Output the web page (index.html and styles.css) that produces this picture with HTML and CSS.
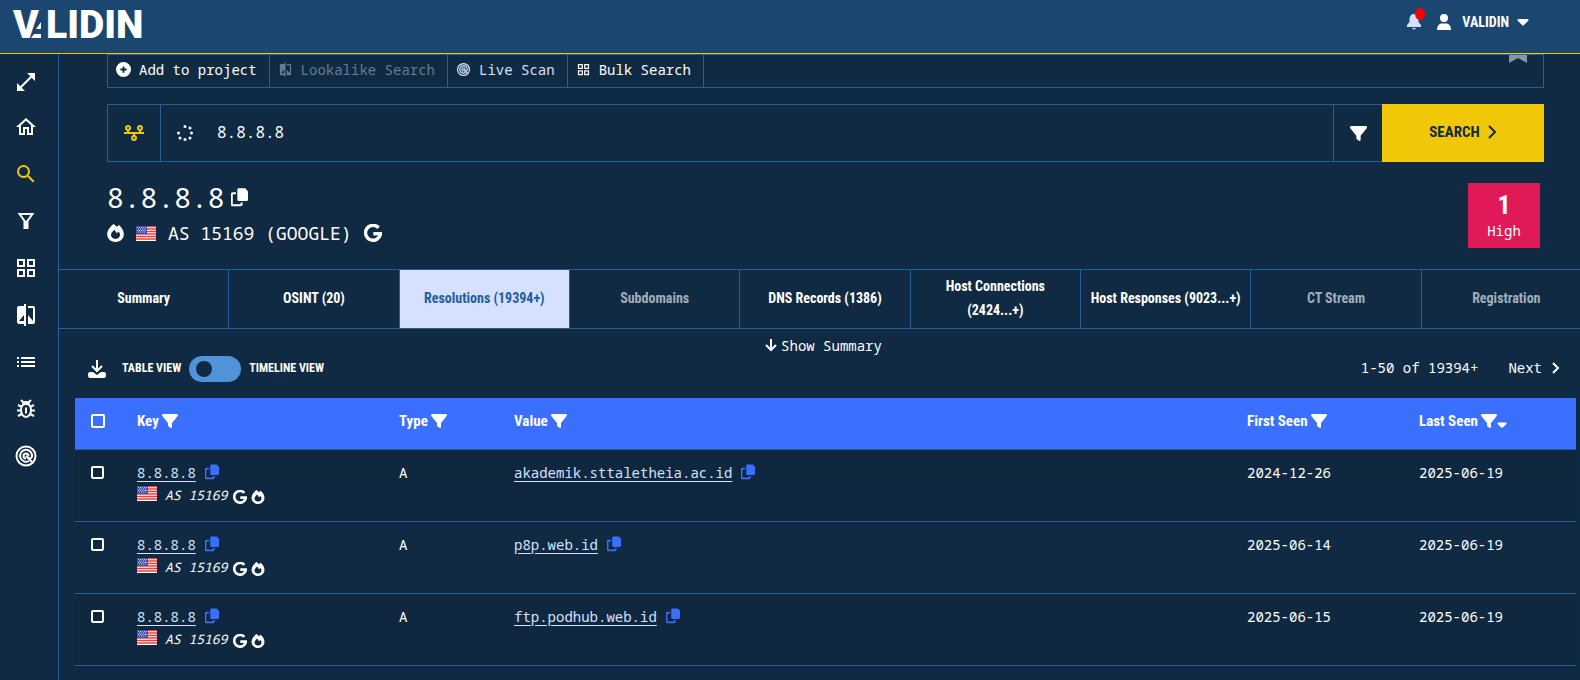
FILE: index.html
```html
<!DOCTYPE html>
<html lang="en">
<head>
    <meta charset="UTF-8">
    <meta name="viewport" content="width=device-width, initial-scale=1.0">
    <title>Validin - 8.8.8.8</title>
    <link rel="stylesheet" href="styles.css">
</head>
<body>
    <!-- Icon definitions -->
    <svg class="sprite" aria-hidden="true">
        <symbol id="expand" viewBox="0 0 24 24"><path d="M21 11V3h-8l3.29 3.29-10 10L3 13v8h8l-3.29-3.29 10-10z"/></symbol>
        <symbol id="home" viewBox="0 0 24 24"><path d="M12 5.69l5 4.5V18h-2v-6H9v6H7v-7.81l5-4.5M12 3L2 12h3v8h6v-6h2v6h6v-8h3L12 3z"/></symbol>
        <symbol id="search" viewBox="0 0 24 24"><path d="M15.5 14h-.79l-.28-.27A6.47 6.47 0 0 0 16 9.5 6.5 6.5 0 1 0 9.5 16c1.61 0 3.09-.59 4.23-1.57l.27.28v.79l5 4.99L20.49 19l-4.99-5zm-6 0C7.01 14 5 11.99 5 9.5S7.01 5 9.5 5 14 7.01 14 9.5 11.99 14 9.5 14z"/></symbol>
        <symbol id="funnel" viewBox="0 0 24 24"><path d="M5.500 5h13L13 12.500V19h-2v-6.500z" fill="none" stroke="currentColor" stroke-width="2"/><path d="M9.500 12h5v8h-5z"/></symbol>
        <symbol id="grid" viewBox="0 0 24 24"><path d="M3 3v8h8V3H3zm6 6H5V5h4v4zm-6 4v8h8v-8H3zm6 6H5v-4h4v4zm4-16v8h8V3h-8zm6 6h-4V5h4v4zm-6 4v8h8v-8h-8zm6 6h-4v-4h4v4z"/></symbol>
        <symbol id="compare" viewBox="0 0 24 24"><path d="M10 3H5c-1.1 0-2 .9-2 2v14c0 1.1.9 2 2 2h5v2h2V1h-2v2zm0 15H5l5-6v6zm9-15h-5v2h5v13l-5-6v9h5c1.1 0 2-.9 2-2V5c0-1.1-.9-2-2-2z"/></symbol>
        <symbol id="list" viewBox="0 0 24 24"><path d="M3 13h2v-2H3v2zm0 4h2v-2H3v2zm0-8h2V7H3v2zm4 4h14v-2H7v2zm0 4h14v-2H7v2zM7 7v2h14V7H7z"/></symbol>
        <symbol id="bug" viewBox="0 0 24 24"><path d="M12 7c3 0 5 2.500 5 6s-2 7-5 7-5-3.500-5-7 2-6 5-6z" fill="none" stroke="currentColor" stroke-width="2"/><path d="M8 8c0-2.500 1.500-4 4-4s4 1.500 4 4z"/><path d="M7 3l3 3M17 3l-3 3M4 8l4 2M20 8l-4 2M3 13.500h4M17 13.500h4M4 19l4-2M20 19l-4-2M12 10.500v6" fill="none" stroke="currentColor" stroke-width="2"/></symbol>
        <symbol id="target" viewBox="0 0 24 24"><g fill="none" stroke="currentColor" stroke-width="2"><circle cx="12" cy="12" r="9.500"/><path d="M15 17a6 6 0 1 1 3-4.500c-.5 2-2 2.500-3 1.500l-3-2M12 12l6 6" /><path d="M12 14.500a2.500 2.500 0 1 1 2.500-2.500"/></g></symbol>
        <symbol id="plus" viewBox="0 0 24 24"><path fill-rule="evenodd" d="M12 0a12 12 0 1 0 0 24 12 12 0 0 0 0-24zm-1.500 7h3v3.500H17v3h-3.500V17h-3v-3.500H7v-3h3.500z"/></symbol>
        <symbol id="filter" viewBox="0 0 512 512"><path d="M3.900 54.900C10.500 40.900 24.500 32 40 32h432c15.500 0 29.500 8.900 36.100 22.900s4.600 30.500-5.200 42.500L320 320.900V448c0 12.100-6.800 23.200-17.700 28.600s-23.800 4.300-33.500-3l-64-48c-8.100-6-12.800-15.500-12.800-25.600v-79.100L9 97.300C-.7 85.400-2.800 68.800 3.900 54.900z"/></symbol>
        <symbol id="copy" viewBox="0 0 24 26"><path d="M11 0h9l4 4v12a2 2 0 0 1-2 2H11a2 2 0 0 1-2-2V2a2 2 0 0 1 2-2z"/><path d="M7 7H3a2 2 0 0 0-2 2v13a2 2 0 0 0 2 2h10a2 2 0 0 0 2-2v-2" fill="none" stroke="currentColor" stroke-width="3"/></symbol>
        <symbol id="flame" viewBox="0 0 24 26"><path fill-rule="evenodd" d="M9 0c2 1 3.500 2.500 5 4.500C15 3 15.500 2.500 17 1.500 21 5 24 10 24 14.500 24 21 19 26 12 26S0 21 0 14.500C0 9 5 3.500 9 0zM8 11c-1.500 1.500-2.500 3-2.500 5 0 3.500 3 5.500 6.500 5.500s6.500-2 6.500-5.500c0-2-1-3.500-2-5L14 13.500 10 8c0 1-1 2-2 3z"/></symbol>
        <symbol id="google" viewBox="0 0 24 24"><path d="M19.500 5A10 10 0 1 0 22 13H12.500" fill="none" stroke="currentColor" stroke-width="4.500"/></symbol>
        <symbol id="flag" viewBox="0 0 20 15"><path fill="#fff" d="M0 0h20v15H0z"/><path d="M0 .5h20M0 3h20M0 5.500h20M0 8h20M0 10.500h20M0 13h20" stroke="#e8403c" stroke-width="1.300"/><path fill="#3f4fae" d="M0 0h11v8H0z"/><path d="M1 1.500h9M2 3h8M1 4.500h9M2 6h8" stroke="#c5cbee" stroke-dasharray="1 1"/></symbol>
        <symbol id="down" viewBox="0 0 12 14"><path d="M6 1v11M1 7l5 5 5-5" fill="none" stroke="currentColor" stroke-width="2"/></symbol>
        <symbol id="chevron" viewBox="0 0 10 16"><path d="M2 2l6 6-6 6" fill="none" stroke="currentColor" stroke-width="2"/></symbol>
        <symbol id="next" viewBox="0 0 8 12"><path d="M1 1l5 5-5 5" fill="none" stroke="currentColor" stroke-width="2"/></symbol>
        <symbol id="caret" viewBox="0 0 12 8"><path d="M1 1h10q1 1 0 2L7 7q-1 1-2 0L1 3Q0 2 1 1z"/></symbol>
    </svg>

    <header class="header">
        <a class="logo" href="#" aria-label="Validin">
            <svg width="136" height="52" viewBox="0 0 136 52">
                <text x="0" y="38">V</text>
                <path d="M18 38l3-4h7v4zM23 29l5-7v7z"/>
                <text x="33" y="38">LIDIN</text>
            </svg>
        </a>
        <div class="account">
            <button class="bell" aria-label="Notifications">
                <svg width="14" height="16" viewBox="0 0 14 16"><path d="M7 0c-3 0-4.500 2-4.500 5v3L0 11v2h14v-2l-2.500-3V5C11.500 2 10 0 7 0zM5 14h4q-2 3-4 0z"/></svg>
                <span class="dot"></span>
            </button>
            <button class="user">
                <svg width="14" height="16" viewBox="0 0 14 16"><circle cx="7" cy="4" r="4"/><path d="M0 16c0-4 2-6.500 5-6.500h4c3 0 5 2.500 5 6.500z"/></svg>
                <span>VALIDIN</span>
                <svg width="12" height="8"><use href="#caret"/></svg>
            </button>
        </div>
    </header>

    <div class="layout">
        <nav class="sidebar">
            <a href="#" aria-label="Expand"><svg><use href="#expand"/></svg></a>
            <a href="#" aria-label="Home"><svg><use href="#home"/></svg></a>
            <a href="#" aria-label="Search" class="current"><svg><use href="#search"/></svg></a>
            <a href="#" aria-label="Filter"><svg><use href="#funnel"/></svg></a>
            <a href="#" aria-label="Bulk search"><svg><use href="#grid"/></svg></a>
            <a href="#" aria-label="Lookalikes"><svg><use href="#compare"/></svg></a>
            <a href="#" aria-label="Lists"><svg><use href="#list"/></svg></a>
            <a href="#" aria-label="Threats"><svg><use href="#bug"/></svg></a>
            <a href="#" aria-label="Live scan"><svg><use href="#target"/></svg></a>
        </nav>

        <main class="content">
            <div class="top">
                <div class="toolbar">
                    <button><svg><use href="#plus"/></svg>Add to project</button>
                    <button class="dim" disabled><svg><use href="#compare"/></svg>Lookalike Search</button>
                    <button class="scan"><svg><use href="#target"/></svg>Live Scan</button>
                    <button><svg><use href="#grid"/></svg>Bulk Search</button>
                    <svg class="bookmark" width="18" height="8" viewBox="0 0 18 8"><path d="M0 0h18v8L9 3 0 8z"/></svg>
                </div>

                <form class="search-bar">
                    <button type="button" class="graph" aria-label="Graph">
                        <svg width="20" height="16" viewBox="0 0 20 16"><g fill="none" stroke="currentColor" stroke-width="2"><circle cx="4" cy="3" r="2"/><circle cx="16" cy="3" r="2"/><circle cx="10" cy="13" r="2"/><path d="M0 8h20M4 5v3M16 5v3M10 8v3"/></g></svg>
                    </button>
                    <svg class="spinner" width="16" height="16" viewBox="0 0 16 16"><circle cx="8" cy="1.500" r="1.500"/><circle cx="13" cy="3" r="1.500"/><circle cx="14.500" cy="8" r="1.500"/><circle cx="13" cy="13" r="1.500"/><circle cx="8" cy="14.500" r="1.500"/><circle cx="3" cy="13" r="1.500"/><circle cx="1.500" cy="8" r="1.500"/></svg>
                    <input type="text" value="8.8.8.8" aria-label="Search query">
                    <button type="button" class="filter" aria-label="Filters"><svg width="17" height="17"><use href="#filter"/></svg></button>
                    <button type="button" class="submit">SEARCH <svg width="10" height="16"><use href="#chevron"/></svg></button>
                </form>

                <div class="subject">
                    <div>
                        <h1>8.8.8.8 <svg width="17" height="19"><use href="#copy"/></svg></h1>
                        <p class="asn">
                            <svg width="17" height="18"><use href="#flame"/></svg>
                            <svg width="20" height="15"><use href="#flag"/></svg>
                            <span>AS 15169 (GOOGLE)</span>
                            <svg width="18" height="18"><use href="#google"/></svg>
                        </p>
                    </div>
                    <div class="score"><strong>1</strong>High</div>
                </div>
            </div>

            <nav class="tabs">
                <button>Summary</button>
                <button>OSINT (20)</button>
                <button class="active">Resolutions (19394+)</button>
                <button disabled>Subdomains</button>
                <button>DNS Records (1386)</button>
                <button>Host Connections (2424...+)</button>
                <button>Host Responses (9023...+)</button>
                <button disabled>CT Stream</button>
                <button disabled>Registration</button>
            </nav>

            <button class="show-summary"><svg width="12" height="14"><use href="#down"/></svg>Show Summary</button>

            <div class="table-bar">
                <button class="download" aria-label="Download">
                    <svg width="18" height="18" viewBox="0 0 18 18"><path d="M9 0v11M4 6l5 5 5-5" fill="none" stroke="currentColor" stroke-width="2"/><path d="M2 12h3l4 3 4-3h3q2 0 2 3t-2 3H2q-2 0-2-3t2-3z"/></svg>
                </button>
                <label class="switch">
                    <span>TABLE VIEW</span>
                    <input type="checkbox">
                    <span>TIMELINE VIEW</span>
                </label>
                <div class="pager">
                    <span>1-50 of 19394+</span>
                    <a href="#">Next <svg width="8" height="12"><use href="#next"/></svg></a>
                </div>
            </div>

            <table class="results">
                <thead>
                    <tr>
                        <th class="col-check"><input type="checkbox" aria-label="Select all"></th>
                        <th class="col-key">Key <svg><use href="#filter"/></svg></th>
                        <th class="col-type">Type <svg><use href="#filter"/></svg></th>
                        <th>Value <svg><use href="#filter"/></svg></th>
                        <th class="col-first">First Seen <svg><use href="#filter"/></svg></th>
                        <th class="col-last">Last Seen <svg><use href="#filter"/></svg><svg class="sort"><use href="#caret"/></svg></th>
                    </tr>
                </thead>
                <tbody>
                    <tr>
                        <td><input type="checkbox" aria-label="Select row"></td>
                        <td>
                            <a href="#">8.8.8.8</a><svg class="copy"><use href="#copy"/></svg>
                            <div class="origin"><svg class="flag"><use href="#flag"/></svg><em>AS 15169</em><svg><use href="#google"/></svg><svg><use href="#flame"/></svg></div>
                        </td>
                        <td>A</td>
                        <td><a href="#">akademik.sttaletheia.ac.id</a><svg class="copy"><use href="#copy"/></svg></td>
                        <td>2024-12-26</td>
                        <td>2025-06-19</td>
                    </tr>
                    <tr>
                        <td><input type="checkbox" aria-label="Select row"></td>
                        <td>
                            <a href="#">8.8.8.8</a><svg class="copy"><use href="#copy"/></svg>
                            <div class="origin"><svg class="flag"><use href="#flag"/></svg><em>AS 15169</em><svg><use href="#google"/></svg><svg><use href="#flame"/></svg></div>
                        </td>
                        <td>A</td>
                        <td><a href="#">p8p.web.id</a><svg class="copy"><use href="#copy"/></svg></td>
                        <td>2025-06-14</td>
                        <td>2025-06-19</td>
                    </tr>
                    <tr>
                        <td><input type="checkbox" aria-label="Select row"></td>
                        <td>
                            <a href="#">8.8.8.8</a><svg class="copy"><use href="#copy"/></svg>
                            <div class="origin"><svg class="flag"><use href="#flag"/></svg><em>AS 15169</em><svg><use href="#google"/></svg><svg><use href="#flame"/></svg></div>
                        </td>
                        <td>A</td>
                        <td><a href="#">ftp.podhub.web.id</a><svg class="copy"><use href="#copy"/></svg></td>
                        <td>2025-06-15</td>
                        <td>2025-06-19</td>
                    </tr>
                </tbody>
            </table>
        </main>
    </div>
</body>
</html>
```

FILE: styles.css
```css
* {
    box-sizing: border-box;
}

body {
    margin: 0;
    min-height: 100vh;
    display: flex;
    flex-direction: column;
    background-color: #102a43;
    color: #fff;
    font-family: "Noto Sans Mono", "DejaVu Sans Mono", monospace;
    font-size: 14px;
    overflow-x: hidden;
}

svg {
    fill: currentColor;
    flex: none;
}

.sprite {
    display: none;
}

button {
    background: none;
    border: none;
    padding: 0;
    margin: 0;
    color: inherit;
    font: inherit;
    cursor: pointer;
}

a {
    color: inherit;
}

/* Header */
.header {
    display: flex;
    justify-content: space-between;
    height: 54px;
    padding: 0 51px 0 13px;
    background-color: #1b466f;
    border-bottom: 1px solid #f0c808;
}

.logo svg {
    display: block;
    overflow: visible;
}

.logo text {
    font-family: Roboto, sans-serif;
    font-weight: 900;
    font-size: 39px;
}

.account {
    display: flex;
    gap: 16px;
    height: 44px;
    align-items: center;
}

.bell {
    position: relative;
    height: 16px;
    color: #d6e0ff;
}

.bell svg {
    display: block;
}

.dot {
    position: absolute;
    top: -6px;
    left: 8px;
    width: 10px;
    height: 12px;
    border-radius: 50%;
    background-color: #f00;
}

.user {
    display: flex;
    align-items: center;
    gap: 8px;
}

.user span {
    padding-left: 3px;
}

.user,
.submit,
.tabs button,
.switch,
.results th,
.score strong {
    font-family: "Liberation Sans Narrow", "Roboto Condensed", Roboto, sans-serif;
    font-weight: bold;
}

/* Sidebar */
.layout {
    display: flex;
    flex: 1;
}

.sidebar {
    flex: 0 0 59px;
    display: flex;
    flex-direction: column;
    gap: 23px;
    padding: 16px 0 0 14px;
    border-right: 1px solid #235f9b;
}

.sidebar a,
.sidebar svg {
    display: block;
    width: 24px;
    height: 24px;
}

.sidebar a:first-child {
    margin-bottom: -2px;
}

.sidebar .current {
    color: #f0c808;
}

.content {
    flex: 1;
    min-width: 0;
}

.top {
    padding: 0 36px 0 48px;
}

.toolbar {
    display: flex;
    height: 34px;
    border: 1px solid #235f9b;
}

.toolbar button {
    display: flex;
    align-items: center;
    gap: 8px;
    padding: 0 12px 3px 8px;
    border-right: 1px solid #235f9b;
}

.toolbar button svg {
    width: 15px;
    height: 15px;
}

.toolbar .dim {
    color: #647b95;
}

.toolbar .scan {
    color: #d6e0ff;
}

.bookmark {
    margin: 0 16px 0 auto;
    color: #8795a1;
}

/* Search bar */
.search-bar {
    display: flex;
    align-items: center;
    height: 58px;
    margin-top: 16px;
    border: 1px solid #235f9b;
}

.search-bar button {
    display: flex;
    align-items: center;
    justify-content: center;
    align-self: stretch;
}

.graph {
    width: 53px;
    border-right: 1px solid #235f9b;
    color: #f0c808;
}

.spinner {
    margin: 0 24px 0 16px;
}

.search-bar input {
    flex: 1;
    min-width: 0;
    background: none;
    border: none;
    outline: none;
    padding: 0 0 2px;
    color: #fff;
    font: inherit;
    font-size: 16px;
}

.search-bar .filter {
    width: 50px;
    border-left: 1px solid #235f9b;
}

.search-bar .submit {
    width: 162px;
    gap: 7px;
    margin: -1px;
    padding-bottom: 3px;
    background-color: #f0c808;
    color: #102a43;
    font-size: 15px;
}

/* Subject */
.subject {
    display: flex;
    justify-content: space-between;
    padding: 21px 4px 21px 0;
}

h1 {
    display: flex;
    align-items: center;
    gap: 6px;
    margin: 0;
    font-size: 28px;
    font-weight: normal;
    line-height: 28px;
}

.asn {
    display: flex;
    align-items: center;
    gap: 12px;
    margin: 9px 0 0;
    font-size: 18px;
    line-height: 26px;
}

.score {
    width: 72px;
    height: 65px;
    padding-top: 6px;
    background-color: #e01a59;
    text-align: center;
    line-height: 20px;
}

.score strong {
    display: block;
    font-size: 26px;
    line-height: 32px;
}

/* Tabs */
.tabs {
    display: grid;
    grid-template-columns: repeat(9, 1fr);
    margin-right: -12px;
}

.tabs button {
    height: 60px;
    padding: 0 8px 3px;
    border: 1px solid #235f9b;
    border-left: none;
    font-size: 14px;
    line-height: 24px;
}

.tabs button:disabled {
    color: #a2aeb9;
}

.tabs .active {
    background-color: #d6e0ff;
    color: #235f9b;
}

.show-summary {
    display: flex;
    align-items: center;
    gap: 4px;
    height: 20px;
    margin: 6px auto 0;
    padding-left: 8px;
}

.table-bar {
    display: flex;
    align-items: center;
    height: 26px;
    margin: 1px 0 16px;
    padding: 0 20px 0 29px;
}

.download {
    height: 18px;
    margin-right: 16px;
}

.switch {
    display: flex;
    align-items: center;
    gap: 8px;
    font-size: 12px;
}

.switch span,
.pager {
    padding-bottom: 3px;
}

.switch input {
    appearance: none;
    width: 52px;
    height: 26px;
    margin: 0;
    padding: 5px 7px;
    border-radius: 13px;
    background-color: #4f94d8;
}

.switch input::before {
    content: "";
    display: block;
    width: 16px;
    height: 16px;
    border-radius: 50%;
    background-color: #102a43;
}

.pager {
    display: flex;
    gap: 30px;
    margin-left: auto;
}

.pager a {
    display: flex;
    align-items: center;
    gap: 10px;
    text-decoration: none;
}

/* Results table */
.results {
    width: calc(100% - 20px);
    margin-left: 16px;
    table-layout: fixed;
    border-collapse: collapse;
}

.results th,
.results td {
    padding: 12px 8px 0;
    border-bottom: 1px solid #235f9b;
    text-align: left;
    vertical-align: top;
    line-height: 22px;
}

.results th {
    height: 51px;
    background-color: #3b6fff;
    font-size: 15px;
}

.results td {
    height: 72px;
}

.results tbody tr:nth-child(odd) {
    background-color: #10283f;
}

.col-check {
    width: 54px;
}

.col-key {
    width: 262px;
}

.col-type {
    width: 115px;
}

.col-first {
    width: 172px;
}

.col-last {
    width: 165px;
}

.results th svg {
    width: 16px;
    height: 16px;
    vertical-align: -3px;
}

.results th .sort {
    width: 10px;
    height: 8px;
}

.results input {
    appearance: none;
    display: block;
    width: 14px;
    height: 14px;
    margin: 4px 8px;
    border: 2px solid #fff;
    border-radius: 2px;
}

.results td input {
    width: 13px;
    height: 13px;
}

.results a {
    color: #d6e0ff;
    text-underline-offset: 3px;
}

.copy {
    width: 14px;
    height: 16px;
    margin-left: 9px;
    vertical-align: -2px;
    color: #3b6fff;
}

.origin {
    display: flex;
    align-items: center;
    gap: 4px;
    font-size: 13px;
}

.origin em {
    padding-right: 2px;
}

.origin svg {
    width: 14px;
    height: 14px;
    margin-top: 4px;
}

.origin .flag {
    width: 20px;
    height: 15px;
    margin: 0 4px 2px 0;
}
```
